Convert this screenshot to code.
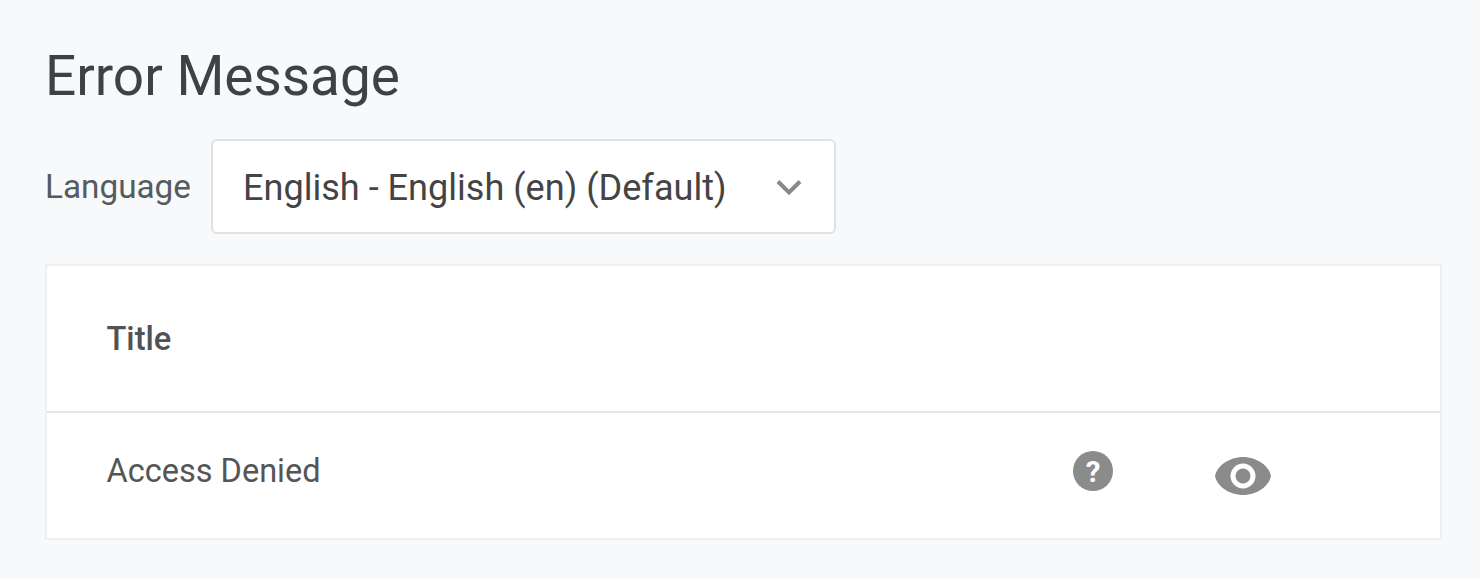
<style>
:global(body){margin:0;background:#f8f9fb;font-family:Roboto,sans-serif}
.page{height:579px;box-sizing:border-box;padding:40px 38px 0 45px}
h1{margin:0;font-size:54.9px;font-weight:400;line-height:72px;color:#3f4243}
.lang{display:flex;align-items:center;margin-top:27px}
label{font-size:33.3px;color:#555b5e;width:166px}
.sel{width:625px;height:95px;box-sizing:border-box;border:2px solid #dfe2e5;border-radius:6px;background:#fff;display:flex;align-items:center;justify-content:space-between;padding:2px 31px 0 30px;font-size:36.1px;color:#444}
.card{margin-top:30px;height:276px;box-sizing:border-box;border:2px solid #edeff1;background:#fff;display:flex;flex-direction:column}
.head{height:145px;border-bottom:2px solid #e3e5e9;display:flex;align-items:center;padding-left:59.5px;font-size:32.6px;font-weight:500;color:#505254}
.row{flex:1;display:flex;align-items:center;padding-left:59.5px;font-size:32.5px;color:#555;position:relative}
.row span{padding-bottom:10px}
.icons{position:absolute;left:1026px;top:38px;display:flex;align-items:flex-start;gap:102px}
.eye{margin-top:6px}
</style>
<div class="page">
<h1>Error Message</h1>
<div class="lang"><label>Language</label><div class="sel"><span>English - English (en) (Default)</span>
<svg width="28" height="18" viewBox="0 0 28 18"><path d="M3 2.5l11 11 11-11" fill="none" stroke="#888" stroke-width="4"/></svg></div></div>
<div class="card"><div class="head">Title</div>
<div class="row"><span>Access Denied</span><div class="icons">
<svg width="40" height="40" viewBox="0 0 40 40"><circle cx="20" cy="20" r="20" fill="#8a8c8b"/><text x="20" y="31" text-anchor="middle" font-size="29.5" font-weight="700" font-family="Roboto" fill="#fff">?</text></svg>
<svg class="eye" width="56" height="38" viewBox="0 0 56 38"><path d="M0 19C2 9 14 0 28 0s26 9 28 19c-2 10-14 19-28 19S2 29 0 19z" fill="#8a8c8b"/><circle cx="28" cy="19" r="10" fill="none" stroke="#fff" stroke-width="5"/></svg>
</div></div></div>
</div>
